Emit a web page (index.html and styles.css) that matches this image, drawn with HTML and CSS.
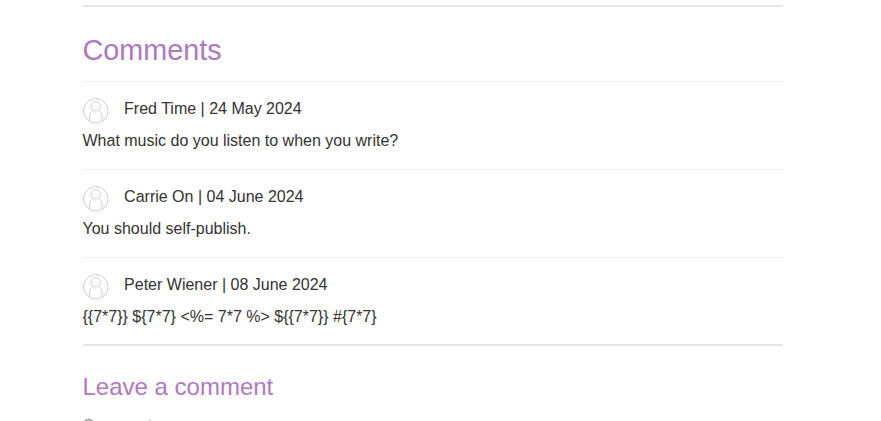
FILE: index.html
```html
<!DOCTYPE html>
<html lang="en">
<head>
<meta charset="utf-8">
<title>Comments</title>
<link rel="stylesheet" href="styles.css">
</head>
<body>
<svg class="defs" aria-hidden="true"><symbol id="avatar" viewBox="0 0 26 26"><circle cx="13" cy="13" r="12.4"/><circle cx="13" cy="8.3" r="4.7"/><path d="M6.6 24V18.6Q6.8 14.2 10.3 12.6M15.7 12.6Q19.2 14.2 19.4 18.6V24"/></symbol></svg>
<main class="container">
<hr>
<h1>Comments</h1>
<section class="comment">
<p class="author"><svg class="avatar"><use href="#avatar"/></svg><span>Fred Time | 24 May 2024</span></p>
<p>What music do you listen to when you write?</p>
</section>
<section class="comment">
<p class="author"><svg class="avatar"><use href="#avatar"/></svg><span>Carrie On | 04 June 2024</span></p>
<p>You should self-publish.</p>
</section>
<section class="comment">
<p class="author"><svg class="avatar"><use href="#avatar"/></svg><span>Peter Wiener | 08 June 2024</span></p>
<p>{{7*7}} ${7*7} &lt;%= 7*7 %&gt; ${{7*7}} #{7*7}</p>
</section>
<hr>
<h2>Leave a comment</h2>
<label>Comment:</label>
</main>
</body>
</html>
```
FILE: styles.css
```css
* { box-sizing: border-box; }
html, body { height: 100%; overflow: hidden; }
body { margin: 0; background: #fff; color: #333332; font: 16px/24px "Liberation Sans", Arial, sans-serif; }
.defs { display: none; }
.container { width: 700px; margin: 0 auto 0 82.5px; padding-top: 5px; }
hr { height: 2px; margin: 0; border: 0; background: #e5e5e5; }
h1, h2 { margin: 0; color: #b077c4; font-weight: 400; }
h1 { height: 74px; padding-top: 25px; font-size: 28.8px; line-height: 36px; }
.comment { height: 88px; padding-top: 15px; border-top: 1px solid #eee; }
.comment:last-of-type { height: 87px; }
.comment p { height: 32px; margin: 0; }
.author { display: flex; gap: 16px; }
.avatar { width: 25.6px; height: 25.6px; margin-top: 1.2px; fill: none; stroke: #cbcfcf; stroke-width: 1; }
h2 { padding-top: 26px; font-size: 24px; line-height: 30px; }
label { display: block; margin-top: 12px; color: #8c8c8c; }
```
